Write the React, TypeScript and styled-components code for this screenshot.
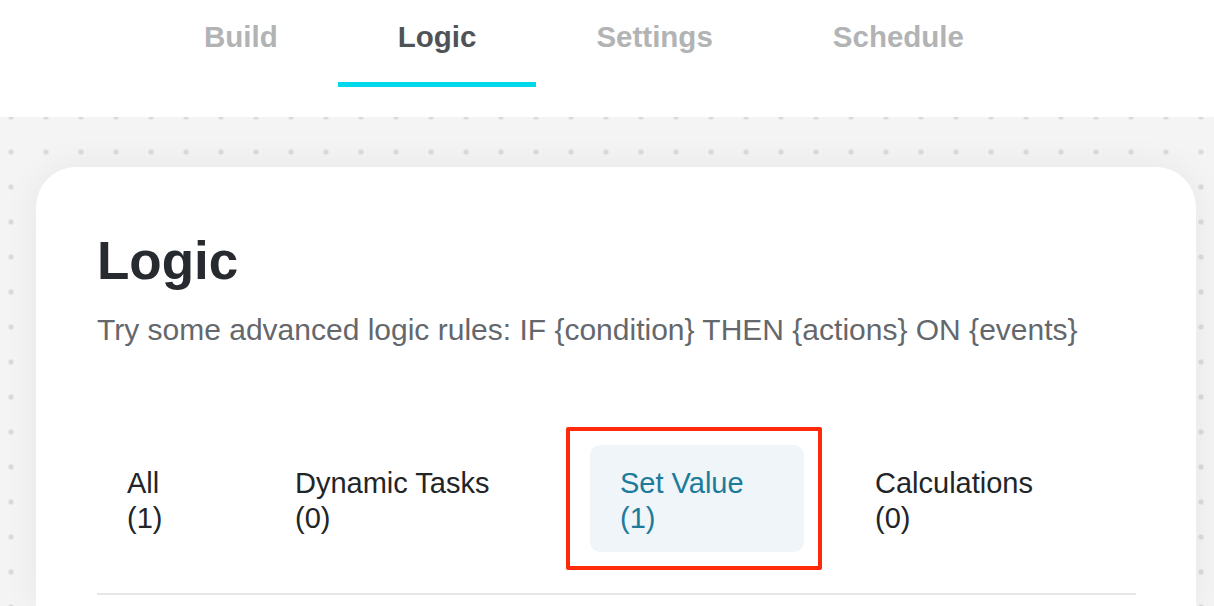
import React from 'react';
import styled, { createGlobalStyle } from 'styled-components';

const GlobalStyle = createGlobalStyle`
  html, body {
    margin: 0;
    padding: 0;
    background: #f4f4f4;
    font-family: 'Liberation Sans', Arial, Helvetica, sans-serif;
    overflow: hidden;
  }
  * { box-sizing: border-box; }
`;

const Page = styled.div`
  width: 1214px;
  height: 606px;
  display: flex;
  flex-direction: column;
  overflow: hidden;
`;

const Header = styled.nav`
  height: 117px;
  flex: none;
  background: #ffffff;
  display: flex;
  align-items: flex-start;
  padding-left: 144px;
  position: relative;
  z-index: 1;
`;

const NavTab = styled.a<{ active?: boolean }>`
  display: block;
  height: 87px;
  padding: 20px 60px 0;
  font-size: 29.5px;
  line-height: 34px;
  font-weight: 700;
  color: ${({ active }) => (active ? '#505356' : '#b2b3b4')};
  border-bottom: 5px solid ${({ active }) => (active ? '#00d8ec' : 'transparent')};
  text-decoration: none;
  cursor: pointer;
`;

const Canvas = styled.main`
  flex: 1;
  background-color: #f4f4f4;
  background-image: radial-gradient(circle, #dadada 2.4px, transparent 3px);
  background-size: 35px 35px;
  background-position: -6.5px -17.5px;
  padding: 50px 18px 0 36px;
  overflow: hidden;
`;

const Card = styled.section`
  background: #ffffff;
  border-radius: 40px 40px 0 0;
  box-shadow: 0 0 36px rgba(0, 0, 0, 0.06);
  padding: 64px 60px 0 61px;
  height: 100%;
`;

const Title = styled.h1`
  margin: 0;
  font-size: 53px;
  line-height: 60px;
  font-weight: 700;
  color: #272b30;
`;

const Subtitle = styled.p`
  margin: 21px 0 0;
  font-size: 30px;
  line-height: 36px;
  color: #64676b;
`;

const TabRow = styled.div`
  display: flex;
  align-items: center;
  margin-top: 97px;
  border-bottom: 2px solid #e6e6e6;
  padding-bottom: 41px;
`;

const Tab = styled.div<{ width: number }>`
  width: ${({ width }) => width}px;
  flex: none;
`;

const TabInner = styled.div<{ selected?: boolean }>`
  display: inline-block;
  vertical-align: top;
  min-width: ${({ selected }) => (selected ? '214px' : '0')};
  padding: 20.5px 30px 16.5px;
  border-radius: 10px;
  background: ${({ selected }) => (selected ? '#eff5f8' : 'transparent')};
  color: ${({ selected }) => (selected ? '#1c7b9b' : '#222528')};
  font-size: 29px;
  line-height: 35px;
`;

const Highlight = styled.div`
  position: relative;
  display: inline-block;
  vertical-align: top;
  &::after {
    content: '';
    position: absolute;
    left: -24px;
    top: -18px;
    right: -18px;
    bottom: -18px;
    border: 4px solid #ff2a0a;
    border-radius: 2px;
    pointer-events: none;
  }
`;

const navItems = ['Build', 'Logic', 'Settings', 'Schedule'];

const tabs = [
  { label: 'All', count: 1, width: 168 },
  { label: 'Dynamic Tasks', count: 0, width: 325 },
  { label: 'Set Value', count: 1, width: 255, selected: true },
  { label: 'Calculations', count: 0, width: 260 },
];

const App: React.FC = () => {
  return (
    <Page>
      <GlobalStyle />
      <Header>
        {navItems.map((item) => (
          <NavTab key={item} active={item === 'Logic'}>
            {item}
          </NavTab>
        ))}
      </Header>
      <Canvas>
        <Card>
          <Title>Logic</Title>
          <Subtitle>
            Try some advanced logic rules: IF {'{condition}'} THEN {'{actions}'} ON {'{events}'}
          </Subtitle>
          <TabRow>
            {tabs.map((tab) => {
              const inner = (
                <TabInner selected={tab.selected}>
                  {tab.label}
                  <br />({tab.count})
                </TabInner>
              );
              return (
                <Tab key={tab.label} width={tab.width}>
                  {tab.selected ? <Highlight>{inner}</Highlight> : inner}
                </Tab>
              );
            })}
          </TabRow>
        </Card>
      </Canvas>
    </Page>
  );
};

export default App;
